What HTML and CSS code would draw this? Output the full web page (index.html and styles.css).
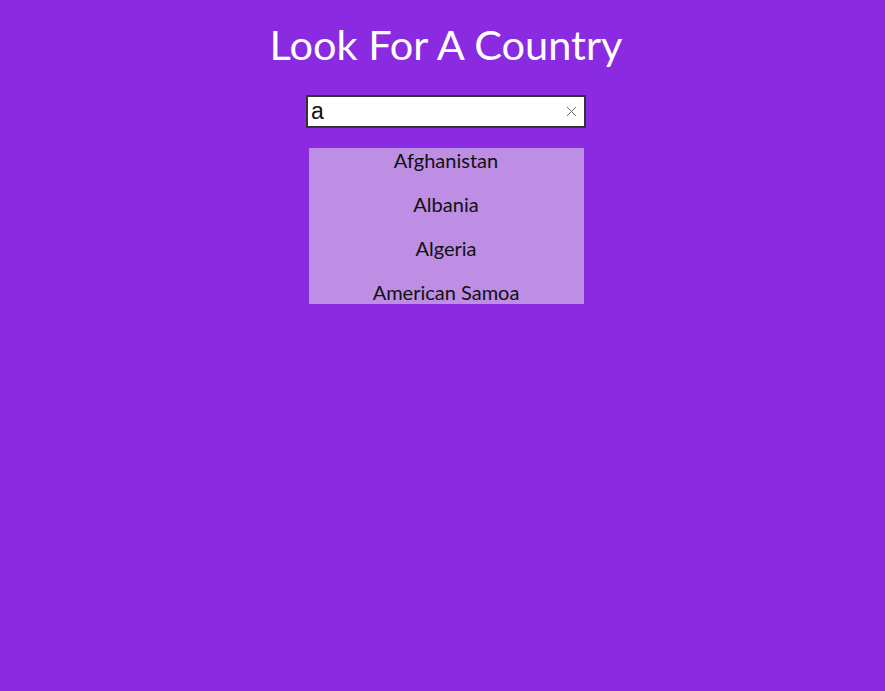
FILE: index.html
```html
<!DOCTYPE html>
<html>
<head>
<meta charset="utf-8">
<link rel="stylesheet" href="styles.css">
</head>
<body>
<main class="app">
  <h1 class="title">Look For A Country</h1>
  <div class="search">
    <input class="search-input" type="text" value="a">
    <svg class="clear" width="11" height="11" viewBox="0 0 11 11"><path d="M1 1 L10 10 M10 1 L1 10" stroke="#666" stroke-width="1" fill="none"/></svg>
  </div>
  <ul class="results">
    <li class="item">Afghanistan</li>
    <li class="item">Albania</li>
    <li class="item">Algeria</li>
    <li class="item">American Samoa</li>
  </ul>
</main>
</body>
</html>
```
FILE: styles.css
```css
html, body {
  margin: 0;
  padding: 0;
  background: #8a2be2;
  height: 100%;
}
.app {
  display: flex;
  flex-direction: column;
  align-items: center;
  padding-left: 7px;
  font-family: Lato, "Liberation Sans", sans-serif;
}
.title {
  margin: 19px 0 0;
  font-size: 41.5px;
  font-weight: 400;
  line-height: 50px;
  color: #fff;
}
.search {
  position: relative;
  margin-top: 26px;
}
.search-input {
  box-sizing: border-box;
  width: 280px;
  height: 33px;
  border: 2px solid #333;
  padding: 0 24px 0 3px;
  font-family: "Liberation Sans", Arial, sans-serif;
  font-size: 23px;
  color: #111;
  background: #fff;
  outline: none;
  display: block;
}
.clear {
  position: absolute;
  right: 9px;
  top: 11px;
}
.results {
  list-style: none;
  margin: 20px 0 0;
  padding: 0;
  width: 275px;
  height: 156px;
  overflow: hidden;
  background: #bd8ee3;
}
.item {
  text-align: center;
  font-size: 20px;
  line-height: 24px;
  height: 44px;
  color: #111;
}
```
